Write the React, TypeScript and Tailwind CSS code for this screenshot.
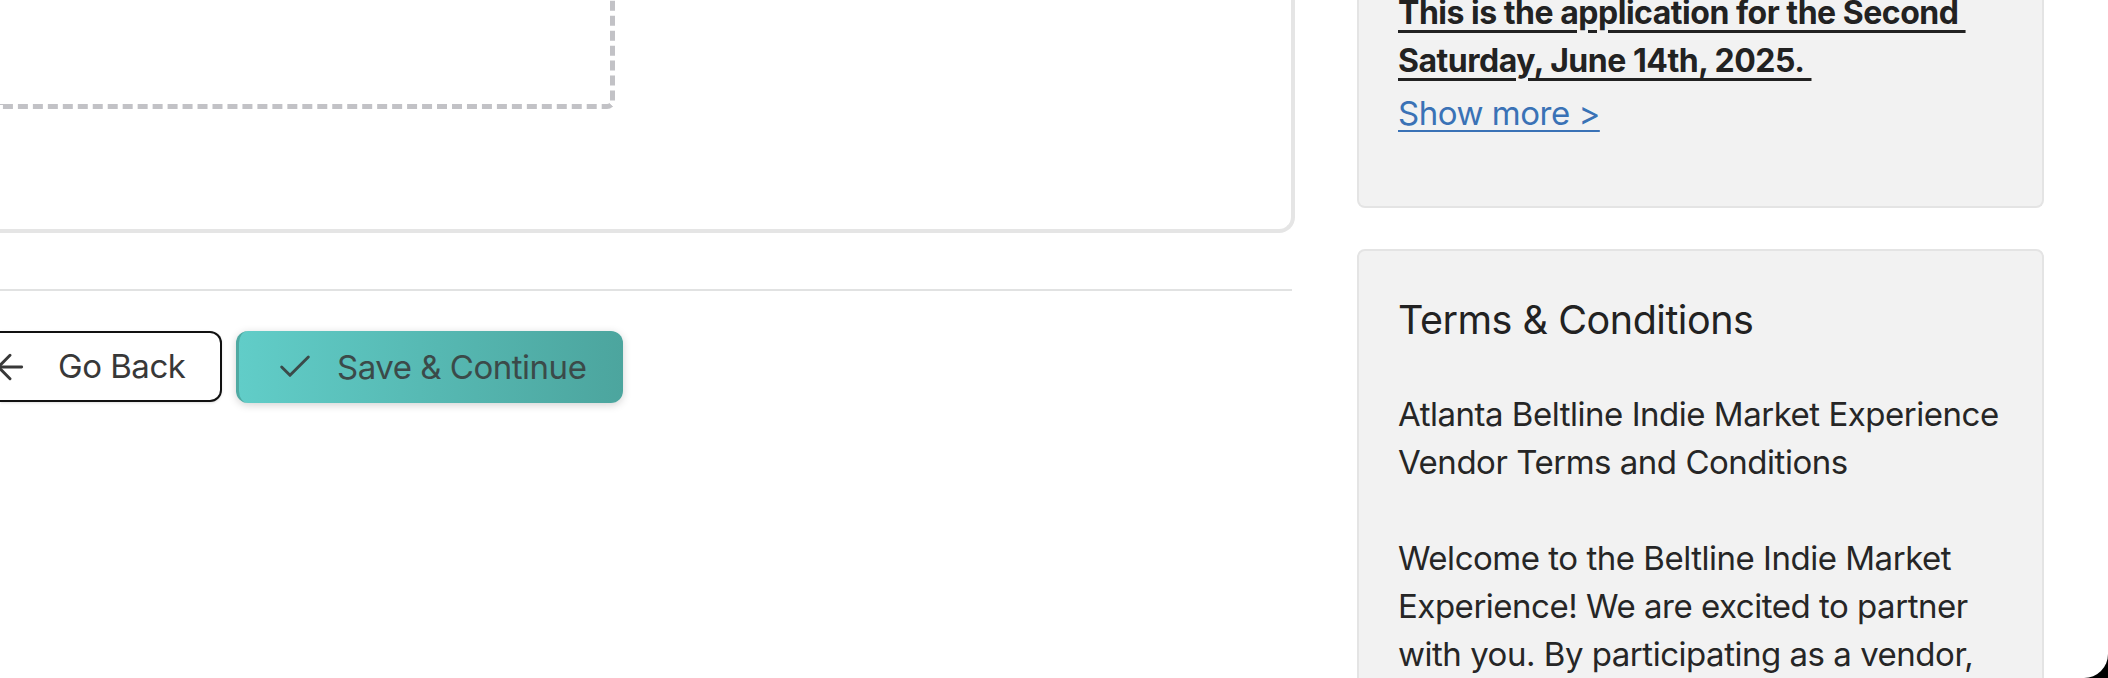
import { ArrowLeft, Check } from "lucide-react"

// Vendor application — bottom of the form step + right-hand event sidebar
export default function App() {
  return (
    <div className="h-[678px] w-[2108px] overflow-hidden bg-black">
      <div className="flex h-full w-full overflow-hidden rounded-br-[24px] bg-white font-['Inter',sans-serif] tracking-[-0.03em] text-[#262626]">
        {/* LEFT — form card, divider, step actions */}
        <div className="flex w-[1295px] shrink-0 flex-col">
          <div className="rounded-br-2xl border-r-4 border-b-4 border-[#e5e5e5] pb-[120px]">
            {/* upload drop zone */}
            <div className="h-[109px] w-[615px] rounded-br-lg border-r-[5px] border-b-[5px] border-dashed border-[#c2c2c6]" />
          </div>

          <div className="mt-[56px] h-[2px] w-[1292px] bg-[#e1e2e2]" />

          <div className="mt-[40px] flex items-start gap-[14px]">
            <button className="flex h-[71px] w-[222px] items-center rounded-r-xl border-2 border-l-0 border-[#111111] bg-white text-[33px] text-[#383838] shadow-sm">
              <ArrowLeft size={40} strokeWidth={1.75} className="-ml-[10px] shrink-0 text-[#383838]" />
              <span className="ml-[28px] leading-none">Go Back</span>
            </button>
            <button className="flex h-[72px] w-[387px] items-center gap-[22px] rounded-xl border-l-[3px] border-[#4fa9a2] bg-linear-to-r from-[#61cdc8] to-[#4ca59e] pl-[36px] text-[33px] text-[#3b4a49] shadow-[0_2px_8px_rgba(0,0,0,0.18)]">
              <Check size={40} strokeWidth={1.75} className="shrink-0 text-[#3b4a49]" />
              <span className="leading-none">Save &amp; Continue</span>
            </button>
          </div>
        </div>

        {/* RIGHT — sidebar */}
        <div className="ml-[62px] flex w-[687px] shrink-0 flex-col">
          <div className="rounded-b-lg border-2 border-t-0 border-[#e4e4e4] bg-[#f2f2f2] px-[39px] pb-[69px]">
            <div className="-mt-[11px] whitespace-nowrap">
              <p className="text-[32px] leading-[48px] font-bold text-[#222222] underline decoration-[3px] underline-offset-[6px]">
                This is the application for the Second&nbsp;
                <br />
                Saturday, June 14th, 2025.&nbsp;
              </p>
              <a href="#" className="mt-[4px] block text-[33px] leading-[48px] text-[#3a72b6] underline decoration-2 underline-offset-[5px]">
                Show more &gt;
              </a>
            </div>
          </div>

          <div className="mt-[41px] rounded-t-lg border-2 border-[#e4e4e4] bg-[#f2f2f2] px-[39px] pt-[40px] pb-[40px]">
            <h2 className="text-[39.5px] leading-[58px] font-normal text-[#222222]">Terms &amp; Conditions</h2>
            <div className="mt-[41px] whitespace-nowrap text-[33px] leading-[48px] text-[#262626]">
              <p>
                Atlanta Beltline Indie Market Experience
                <br />
                Vendor Terms and Conditions
              </p>
              <p className="mt-[48px]">
                Welcome to the Beltline Indie Market
                <br />
                Experience! We are excited to partner
                <br />
                with you. By participating as a vendor,
                <br />
                you agree to the following terms.
              </p>
            </div>
          </div>
        </div>
      </div>
    </div>
  )
}
